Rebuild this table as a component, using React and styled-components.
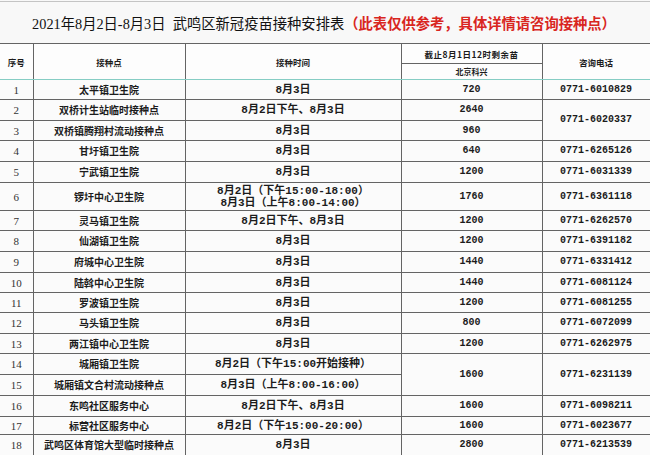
import React from 'react';
import styled, { createGlobalStyle } from 'styled-components';

const GlobalStyle = createGlobalStyle`
  html, body {
    margin: 0;
    padding: 0;
    background: #f8f8f8;
  }
  body {
    font-family: "Noto Sans CJK SC", sans-serif;
    color: #1c1c1c;
  }
`;

const Sheet = styled.div`
  width: 650px;
  height: 455px;
  overflow: hidden;
  padding-top: 1px;
  box-sizing: border-box;
`;

const TitleBar = styled.div`
  height: 41px;
  border-top: 1px solid #c4c4c4;
  display: flex;
  align-items: center;
  justify-content: center;
  font-size: 14.3px;
  white-space: nowrap;
  padding-right: 2px;
`;

const Title = styled.span`
  font-family: "Liberation Serif", "Noto Sans CJK SC", serif;
  color: #111;
`;

const Note = styled.span`
  font-family: "Noto Sans CJK SC", sans-serif;
  font-weight: 700;
  color: #d9261f;
`;

const Table = styled.table`
  border-collapse: collapse;
  table-layout: fixed;
  width: 650px;
  background: #fbfbfb;
`;

const HeadCell = styled.th`
  border: 1px solid #646464;
  border-bottom: 1px solid ${(p) => (p.$upper ? '#646464' : '#86cdc4')};
  font-size: ${(p) => p.$size || 8.5}px;
  letter-spacing: ${(p) => p.$track || 0}px;
  font-weight: 700;
  padding: 0;
  text-align: center;
  vertical-align: middle;
  background: #fdfdfd;
  white-space: nowrap;
  &:first-child {
    border-left: none;
  }
`;

const HeadRow = styled.tr`
  height: ${(p) => p.$h}px;
`;

const Row = styled.tr`
  height: ${(p) => p.$h}px;
`;

const Cell = styled.td`
  border: 1px solid #646464;
  padding: 0;
  text-align: center;
  vertical-align: middle;
  white-space: nowrap;
  line-height: 12px;
`;

const SerialCell = styled(Cell)`
  border-left: none;
  font-family: "Liberation Serif", serif;
  font-size: 11px;
  color: #333;
`;

const SiteCell = styled(Cell)`
  font-size: 10px;
  font-weight: 700;
`;

const TimeCell = styled(Cell)`
  font-family: "Liberation Mono", "Noto Sans CJK SC", monospace;
  font-size: 11px;
  font-weight: 700;
`;

const StockCell = styled(Cell)`
  font-family: "Liberation Mono", monospace;
  font-size: 10px;
  font-weight: 700;
`;

const PhoneCell = styled(Cell)`
  font-family: "Liberation Mono", monospace;
  font-size: 10px;
  font-weight: 700;
`;

const Line = styled.span`
  display: block;
`;

const rows = [
  { no: 1, site: '太平镇卫生院', time: ['8月3日'], stock: '720', phone: '0771-6010829', h: 20 },
  { no: 2, site: '双桥计生站临时接种点', time: ['8月2日下午、8月3日'], stock: '2640', phone: '0771-6020337', phoneSpan: 2, h: 21 },
  { no: 3, site: '双桥镇腾翔村流动接种点', time: ['8月3日'], stock: '960', h: 20 },
  { no: 4, site: '甘圩镇卫生院', time: ['8月3日'], stock: '640', phone: '0771-6265126', h: 21 },
  { no: 5, site: '宁武镇卫生院', time: ['8月3日'], stock: '1200', phone: '0771-6031339', h: 21 },
  { no: 6, site: '锣圩中心卫生院', time: ['8月2日（下午15:00-18:00）', '8月3日（上午8:00-14:00）'], stock: '1760', phone: '0771-6361118', h: 28 },
  { no: 7, site: '灵马镇卫生院', time: ['8月2日下午、8月3日'], stock: '1200', phone: '0771-6262570', h: 20 },
  { no: 8, site: '仙湖镇卫生院', time: ['8月3日'], stock: '1200', phone: '0771-6391182', h: 21 },
  { no: 9, site: '府城中心卫生院', time: ['8月3日'], stock: '1440', phone: '0771-6331412', h: 21 },
  { no: 10, site: '陆斡中心卫生院', time: ['8月3日'], stock: '1440', phone: '0771-6081124', h: 20 },
  { no: 11, site: '罗波镇卫生院', time: ['8月3日'], stock: '1200', phone: '0771-6081255', h: 20 },
  { no: 12, site: '马头镇卫生院', time: ['8月3日'], stock: '800', phone: '0771-6072099', h: 21 },
  { no: 13, site: '两江镇中心卫生院', time: ['8月3日'], stock: '1200', phone: '0771-6262975', h: 20 },
  { no: 14, site: '城厢镇卫生院', time: ['8月2日（下午15:00开始接种）'], stock: '1600', stockSpan: 2, phone: '0771-6231139', phoneSpan: 2, h: 21 },
  { no: 15, site: '城厢镇文合村流动接种点', time: ['8月3日（上午8:00-16:00）'], h: 21 },
  { no: 16, site: '东鸣社区服务中心', time: ['8月2日下午、8月3日'], stock: '1600', phone: '0771-6098211', h: 21 },
  { no: 17, site: '标营社区服务中心', time: ['8月2日（下午15:00-20:00）'], stock: '1600', phone: '0771-6023677', h: 18 },
  { no: 18, site: '武鸣区体育馆大型临时接种点', time: ['8月3日'], stock: '2800', phone: '0771-6213539', h: 21 },
];

export default function App() {
  return (
    <Sheet>
      <GlobalStyle />
      <TitleBar>
        <Title>2021年8月2日-8月3日&nbsp;&nbsp;武鸣区新冠疫苗接种安排表</Title>
        <Note>（此表仅供参考，具体详情请咨询接种点）</Note>
      </TitleBar>
      <Table>
        <colgroup>
          <col style={{ width: 33 }} />
          <col style={{ width: 152 }} />
          <col style={{ width: 216 }} />
          <col style={{ width: 141 }} />
          <col style={{ width: 108 }} />
        </colgroup>
        <thead>
          <HeadRow $h={20}>
            <HeadCell rowSpan={2}>序号</HeadCell>
            <HeadCell rowSpan={2}>接种点</HeadCell>
            <HeadCell rowSpan={2}>接种时间</HeadCell>
            <HeadCell $upper $track={0.5}>截止8月1日12时剩余苗</HeadCell>
            <HeadCell rowSpan={2}>咨询电话</HeadCell>
          </HeadRow>
          <HeadRow $h={16}>
            <HeadCell $size={8}>北京科兴</HeadCell>
          </HeadRow>
        </thead>
        <tbody>
          {rows.map((r) => (
            <Row key={r.no} $h={r.h}>
              <SerialCell>{r.no}</SerialCell>
              <SiteCell>{r.site}</SiteCell>
              <TimeCell>
                {r.time.map((t) => (
                  <Line key={t}>{t}</Line>
                ))}
              </TimeCell>
              {r.stock && <StockCell rowSpan={r.stockSpan || 1}>{r.stock}</StockCell>}
              {r.phone && <PhoneCell rowSpan={r.phoneSpan || 1}>{r.phone}</PhoneCell>}
            </Row>
          ))}
        </tbody>
      </Table>
    </Sheet>
  );
}
